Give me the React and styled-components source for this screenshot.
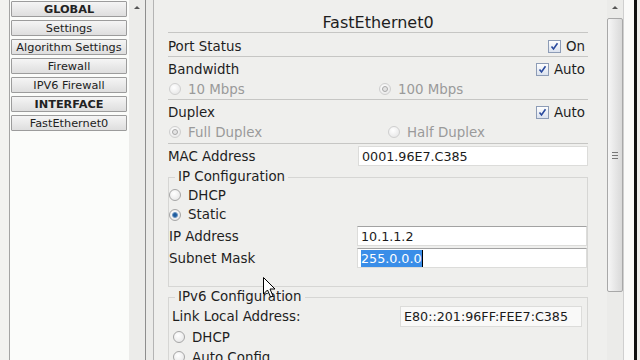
import styled, { createGlobalStyle } from "styled-components";

const GlobalStyle = createGlobalStyle`
  html, body { margin: 0; padding: 0; background: #eeeeec; }
  body { font-family: "DejaVu Sans", Verdana, sans-serif; color: #1e1e1e; }
`;

const Screen = styled.div`
  position: relative;
  display: flex;
  width: 640px;
  height: 360px;
  overflow: hidden;
  background: #eeeeec;
`;

const LeftStrip = styled.div`
  width: 9px;
  background: #f2f2f0;
`;

const NavList = styled.div`
  width: 118px;
  border-left: 1px solid #a4a4a4;
  background: #fbfcfa;
  display: flex;
  flex-direction: column;
  gap: 3px;
  padding: 1px 0 0 1px;
`;

const NavButton = styled.div`
  box-sizing: border-box;
  width: 116px;
  height: 16px;
  border: 1px solid #9c9c9c;
  border-radius: 1px;
  background: linear-gradient(#f5f5f5, #dedede);
  display: flex;
  align-items: center;
  justify-content: center;
  font-size: 11.3px;
  font-weight: ${(p) => (p.$bold ? "bold" : "normal")};
  color: #222;
  white-space: nowrap;
`;

const ScrollTrack = styled.div`
  width: 16px;
  background: #ececea;
  display: flex;
  flex-direction: column;
  align-items: center;
`;

const UpArrow = styled.div`
  margin-top: 6px;
  width: 0;
  height: 0;
  border-left: 3px solid transparent;
  border-right: 3px solid transparent;
  border-bottom: 3px solid #555;
`;

const Divider = styled.div`
  box-sizing: border-box;
  width: 9px;
  background: #ebebe9;
  border-left: 1px solid #8e8e8e;
  border-right: 1px solid #b4b4b4;
`;

const Main = styled.div`
  width: 453px;
  box-sizing: border-box;
  padding: 0 19px 0 14px;
  background: #efefed;
  display: flex;
  flex-direction: column;
`;

const Title = styled.div`
  height: 33px;
  box-sizing: border-box;
  padding-top: 14px;
  font-size: 16px;
  line-height: 18px;
  text-align: center;
  border-bottom: 1px solid #c6c6c4;
`;

const Section = styled.div`
  padding: ${(p) => p.$pad || "0"};
  border-bottom: ${(p) => (p.$line ? "1px solid #c6c6c4" : "none")};
`;

const Row = styled.div`
  box-sizing: border-box;
  display: flex;
  align-items: center;
  justify-content: space-between;
  height: ${(p) => p.$h || 20}px;
  padding-top: ${(p) => p.$pt || 0}px;
  margin-top: ${(p) => p.$mt || 0}px;
`;

const Label = styled.span`
  font-size: 13.4px;
  color: ${(p) => (p.$muted ? "#9a9a9a" : "#1e1e1e")};
  white-space: nowrap;
`;

const CheckWrap = styled.span`
  display: flex;
  align-items: center;
  gap: 5px;
  margin-right: 3px;
`;

const Box = styled.span`
  box-sizing: border-box;
  width: 13px;
  height: 13px;
  border: 1px solid #8d9cb6;
  background: linear-gradient(#fefefe, #dbe2ee);
  display: flex;
  align-items: center;
  justify-content: center;
`;

const Options = styled.div`
  display: flex;
  align-items: center;
  height: ${(p) => p.$h || 20}px;
  padding-left: ${(p) => p.$indent ?? 1}px;
`;

const Option = styled.span`
  display: flex;
  align-items: center;
  gap: 7px;
  width: ${(p) => (p.$w ? `${p.$w}px` : "auto")};
`;

const Radio = styled.span`
  position: relative;
  box-sizing: border-box;
  width: 12px;
  height: 12px;
  border-radius: 50%;
  border: 1px solid ${(p) => (p.$disabled ? "#cfcfcf" : "#a6a6a6")};
  background: radial-gradient(circle at 40% 35%, #ffffff, #e2e2e2);
  &::after {
    content: "";
    display: ${(p) => (p.$checked ? "block" : "none")};
    position: absolute;
    left: 2px;
    top: 2px;
    width: 6px;
    height: 6px;
    border-radius: 50%;
    box-sizing: border-box;
    background: ${(p) => (p.$disabled ? "#e4e4e4" : "#1d5c9e")};
    border: 1px solid ${(p) => (p.$disabled ? "#a8a8a8" : "#6f97c4")};
  }
`;

const Field = styled.div`
  box-sizing: border-box;
  width: ${(p) => p.$w}px;
  height: ${(p) => p.$hgt || 20}px;
  margin-right: ${(p) => p.$mr || 0}px;
  padding-left: 3px;
  display: flex;
  align-items: center;
  background: ${(p) => p.$bg || "#ffffff"};
  border: 1px solid #dcdcda;
  border-top-color: ${(p) => (p.$dark ? "#a2a2a2" : "#dcdcda")};
  font-size: 12.7px;
  color: #1a1a1a;
  white-space: nowrap;
  overflow: hidden;
`;

const Selected = styled.span`
  background: #3a8ee8;
  color: #fff;
  padding: 1px 0;
  border-right: 1px solid #000;
`;

const Group = styled.fieldset`
  margin: ${(p) => p.$mt || 0}px 0 0 0;
  padding: 0 0 ${(p) => p.$pb || 0}px ${(p) => p.$pl || 0}px;
  border: 1px solid #d6d6d4;
  min-width: 0;
`;

const Legend = styled.legend`
  margin-left: ${(p) => p.$ml ?? 6}px;
  padding: 0 3px;
  font-size: 13.4px;
  line-height: 16px;
`;

const MainScroll = styled.div`
  width: 16px;
  background: #ebebe9;
  display: flex;
  flex-direction: column;
  align-items: center;
`;

const Thumb = styled.div`
  box-sizing: border-box;
  margin-top: 9px;
  width: 16px;
  height: 274px;
  border: 1px solid #a8a8a8;
  border-radius: 2px;
  background: linear-gradient(90deg, #f6f6f6, #d9d9d9);
  display: flex;
  flex-direction: column;
  align-items: center;
  justify-content: center;
  gap: 2px;
`;

const Grip = styled.span`
  width: 6px;
  height: 1px;
  background: #777;
`;

const RightEdge = styled.div`
  width: 10px;
  background: #fafaf9;
  border-left: 1px solid #cfcfcf;
  border-right: 3px solid #111;
`;

const Cursor = styled.svg`
  position: absolute;
  left: 263px;
  top: 277px;
`;

const Check = () => (
  <svg width="9" height="9" viewBox="0 0 9 9">
    <path d="M1.5 4.5 L3.5 7 L7.5 1.2" fill="none" stroke="#2a4a9e" strokeWidth="1.6" />
  </svg>
);

const CheckBox = ({ text }) => (
  <CheckWrap>
    <Box>
      <Check />
    </Box>
    <Label>{text}</Label>
  </CheckWrap>
);

const navItems = [
  ["GLOBAL", true],
  ["Settings"],
  ["Algorithm Settings"],
  ["Firewall"],
  ["IPV6 Firewall"],
  ["INTERFACE", true],
  ["FastEthernet0"],
];

export default function App() {
  return (
    <Screen>
      <GlobalStyle />
      <LeftStrip />
      <NavList>
        {navItems.map(([name, bold]) => (
          <NavButton key={name} $bold={bold}>
            {name}
          </NavButton>
        ))}
      </NavList>
      <ScrollTrack>
        <UpArrow />
      </ScrollTrack>
      <Divider />
      <Main>
        <Title>FastEthernet0</Title>
        <Section $line>
          <Row $h={23} $pt={3}>
            <Label>Port Status</Label>
            <CheckBox text="On" />
          </Row>
        </Section>
        <Section $line $pad="2px 0 0">
          <Row>
            <Label>Bandwidth</Label>
            <CheckBox text="Auto" />
          </Row>
          <Options>
            <Option $w={210}>
              <Radio $disabled />
              <Label $muted>10 Mbps</Label>
            </Option>
            <Option>
              <Radio $disabled $checked />
              <Label $muted>100 Mbps</Label>
            </Option>
          </Options>
        </Section>
        <Section $line $pad="2px 0 1px">
          <Row>
            <Label>Duplex</Label>
            <CheckBox text="Auto" />
          </Row>
          <Options>
            <Option $w={219}>
              <Radio $disabled $checked />
              <Label $muted>Full Duplex</Label>
            </Option>
            <Option>
              <Radio $disabled />
              <Label $muted>Half Duplex</Label>
            </Option>
          </Options>
        </Section>
        <Row $h={24} $mt={2}>
          <Label>MAC Address</Label>
          <Field $w={230}>0001.96E7.C385</Field>
        </Row>
        <Group $mt={3} $pb={17}>
          <Legend>IP Configuration</Legend>
          <Options $indent={0}>
            <Option>
              <Radio />
              <Label>DHCP</Label>
            </Option>
          </Options>
          <Options $indent={0} $h={19}>
            <Option>
              <Radio $checked />
              <Label>Static</Label>
            </Option>
          </Options>
          <Row $h={22} $mt={1}>
            <Label>IP Address</Label>
            <Field $w={230} $dark>10.1.1.2</Field>
          </Row>
          <Row $h={22}>
            <Label>Subnet Mask</Label>
            <Field $w={230} $dark>
              <Selected>255.0.0.0</Selected>
            </Field>
          </Row>
        </Group>
        <Group $mt={2} $pl={3}>
          <Legend $ml={3}>IPv6 Configuration</Legend>
          <Row $h={22}>
            <Label>Link Local Address:</Label>
            <Field $w={182} $hgt={21} $mr={5} $bg="#f9f9f8">
              E80::201:96FF:FEE7:C385
            </Field>
          </Row>
          <Options>
            <Option>
              <Radio />
              <Label>DHCP</Label>
            </Option>
          </Options>
          <Options>
            <Option>
              <Radio />
              <Label>Auto Config</Label>
            </Option>
          </Options>
        </Group>
      </Main>
      <MainScroll>
        <UpArrow />
        <Thumb>
          <Grip />
          <Grip />
          <Grip />
        </Thumb>
      </MainScroll>
      <RightEdge />
      <Cursor width="13" height="21" viewBox="0 0 13 21">
        <path d="M0.5 0.5 L0.5 17 L4.5 13 L7.5 20 L10 19 L7 12 L12 12 Z" fill="#fff" stroke="#000" strokeWidth="1" />
      </Cursor>
    </Screen>
  );
}
